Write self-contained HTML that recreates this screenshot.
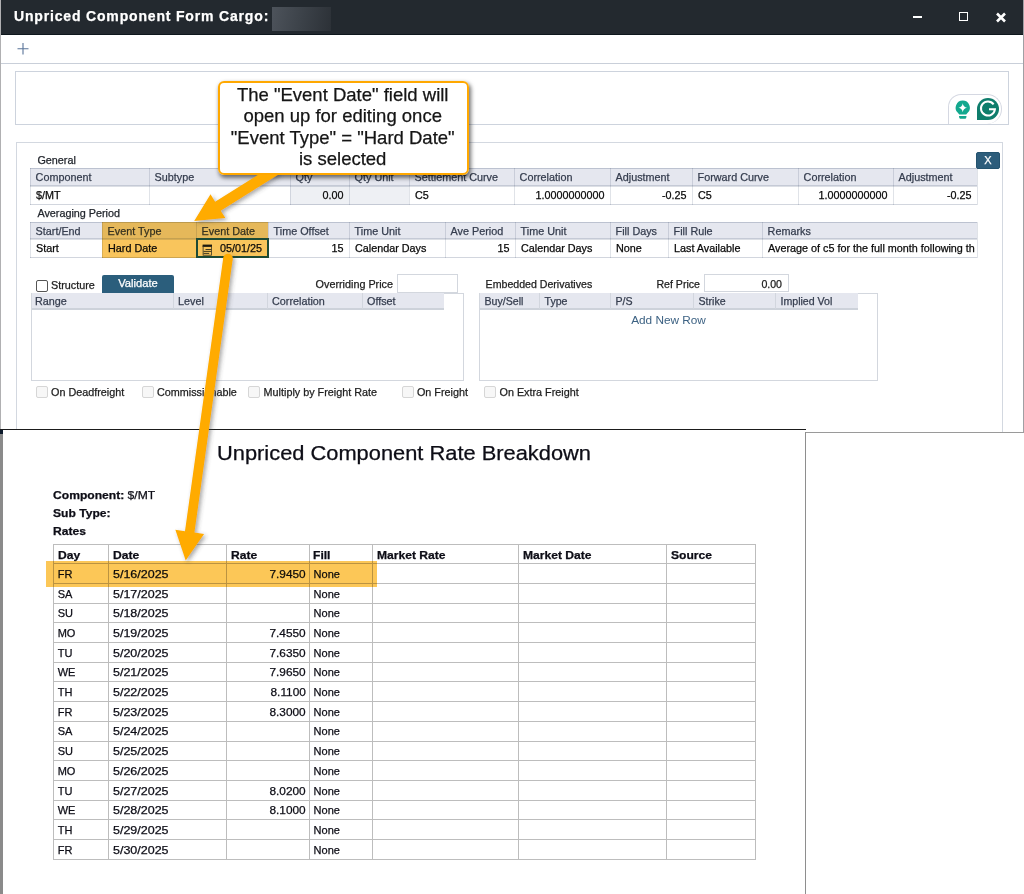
<!DOCTYPE html>
<html><head><meta charset="utf-8">
<style>
*{box-sizing:border-box;margin:0;padding:0}
html,body{width:1024px;height:894px;overflow:hidden;background:#fff;font-family:"Liberation Sans",sans-serif}
body{position:relative}
.a{position:absolute}
.t{white-space:nowrap;-webkit-text-stroke:0.25px currentColor}
</style></head>
<body>
<div class="a" style="left:0px;top:0px;width:1px;height:430px;background:#b0b0b2;"></div>
<div class="a" style="left:1023px;top:0px;width:1px;height:433px;background:#a0a0a4;"></div>
<div class="a" style="left:1px;top:0px;width:1022px;height:34px;background:#23292f;"></div>
<div class="a" style="left:1px;top:34px;width:1022px;height:1px;background:#0e171d;"></div>
<div class="a t" style="left:14px;top:8.10px;font-size:14px;line-height:16.1px;color:#fff;font-weight:bold;letter-spacing:0.83px;">Unpriced Component Form Cargo:</div>
<div class="a" style="left:272px;top:7px;width:59px;height:24px;background:linear-gradient(100deg,#4d535b 0%,#3c4249 50%,#2c3137 100%);"></div>
<div class="a" style="left:913px;top:16px;width:9px;height:2px;background:#fff;"></div>
<div class="a" style="left:959px;top:12px;width:9px;height:9px;border:1.5px solid #fff;"></div>
<svg class="a" style="left:995px;top:12px" width="12" height="11" viewBox="0 0 12 11"><path d="M2 1.5 L10 9.5 M10 1.5 L2 9.5" stroke="#fff" stroke-width="2.6"/></svg>
<svg class="a" style="left:16px;top:42px" width="14" height="14" viewBox="0 0 14 14"><path d="M7 1 V12.5 M1.5 6.7 H12.5" stroke="#5a7499" stroke-width="1.1"/></svg>
<div class="a" style="left:1px;top:63px;width:1022px;height:1px;background:#c9cfd9;"></div>
<div class="a" style="left:15px;top:71px;width:994px;height:54px;border:1px solid #cdd3dd;"></div>
<div class="a" style="left:948px;top:94px;width:54px;height:30px;background:#fff;border:1.5px solid #d5d8e2;border-bottom:none;border-radius:13px 15px 15px 0;"></div>
<svg class="a" style="left:954px;top:99px" width="18" height="21" viewBox="0 0 18 21"><path d="M8.75 1.6 A7.1 7.1 0 0 1 13.9 13.6 L12.2 15.6 H5.3 L3.6 13.6 A7.1 7.1 0 0 1 8.75 1.6Z" fill="#13a88e"/><path d="M5 16.9 H12.5 Q12.5 19.8 10.5 19.8 H7 Q5 19.8 5 16.9Z" fill="#13a88e"/><path d="M8.75 4.3 Q9.3 8.2 13 8.75 Q9.3 9.3 8.75 13.2 Q8.2 9.3 4.5 8.75 Q8.2 8.2 8.75 4.3Z" fill="#fff"/></svg>
<svg class="a" style="left:976px;top:97px" width="24" height="24" viewBox="0 0 24 24"><path d="M12 1 A11 11 0 1 1 12 23 H1 V12 A11 11 0 0 1 12 1Z" fill="#0e7d6c"/><path d="M17.6 7.4 A7 7 0 1 0 18.9 12.3 H13" fill="none" stroke="#fff" stroke-width="2"/></svg>
<div class="a" style="left:16px;top:142px;width:987px;height:300px;border:1px solid #d3d8e0;"></div>
<div class="a" style="left:976px;top:151.5px;width:24px;height:17.5px;background:#2d5d7b;border:1px solid #24536f;border-radius:2px;"></div>
<div class="a t" style="left:688px;width:600px;text-align:center;top:154.06px;font-size:11px;line-height:12.65px;color:#fff;font-weight:normal;">X</div>
<div class="a t" style="left:37.4px;top:153.95px;font-size:10.8px;line-height:12.42px;color:#22262d;font-weight:normal;">General</div>
<div class="a" style="left:30px;top:168px;width:947px;height:18px;background:#e5e7ef;"></div>
<div class="a" style="left:30px;top:186px;width:947px;height:18.5px;background:#fff;"></div>
<div class="a" style="left:290px;top:186px;width:59px;height:18.5px;background:#eef0f4;"></div>
<div class="a" style="left:349px;top:186px;width:60px;height:18.5px;background:#eef0f4;"></div>
<div class="a" style="left:30px;top:168px;width:947px;height:1px;background:#d2d6de;mix-blend-mode:multiply;"></div>
<div class="a" style="left:30px;top:185px;width:947px;height:2px;background:#dcdfe5;mix-blend-mode:multiply;"></div>
<div class="a" style="left:30px;top:203.5px;width:947px;height:1px;background:#d2d6de;mix-blend-mode:multiply;"></div>
<div class="a" style="left:30px;top:168px;width:1px;height:36.5px;background:#e0e3e8;mix-blend-mode:multiply;"></div>
<div class="a" style="left:149px;top:168px;width:1px;height:36.5px;background:#e0e3e8;mix-blend-mode:multiply;"></div>
<div class="a" style="left:290px;top:168px;width:1px;height:36.5px;background:#e0e3e8;mix-blend-mode:multiply;"></div>
<div class="a" style="left:349px;top:168px;width:1px;height:36.5px;background:#e0e3e8;mix-blend-mode:multiply;"></div>
<div class="a" style="left:409px;top:168px;width:1px;height:36.5px;background:#e0e3e8;mix-blend-mode:multiply;"></div>
<div class="a" style="left:514px;top:168px;width:1px;height:36.5px;background:#e0e3e8;mix-blend-mode:multiply;"></div>
<div class="a" style="left:610px;top:168px;width:1px;height:36.5px;background:#e0e3e8;mix-blend-mode:multiply;"></div>
<div class="a" style="left:692px;top:168px;width:1px;height:36.5px;background:#e0e3e8;mix-blend-mode:multiply;"></div>
<div class="a" style="left:798px;top:168px;width:1px;height:36.5px;background:#e0e3e8;mix-blend-mode:multiply;"></div>
<div class="a" style="left:893px;top:168px;width:1px;height:36.5px;background:#e0e3e8;mix-blend-mode:multiply;"></div>
<div class="a" style="left:977px;top:168px;width:1px;height:36.5px;background:#e0e3e8;mix-blend-mode:multiply;"></div>
<div class="a t" style="left:35.6px;top:171.05px;font-size:10.8px;line-height:12.42px;color:#353d4e;font-weight:normal;">Component</div>
<div class="a t" style="left:154.6px;top:171.05px;font-size:10.8px;line-height:12.42px;color:#353d4e;font-weight:normal;">Subtype</div>
<div class="a t" style="left:295.6px;top:171.05px;font-size:10.8px;line-height:12.42px;color:#353d4e;font-weight:normal;">Qty</div>
<div class="a t" style="left:354.6px;top:171.05px;font-size:10.8px;line-height:12.42px;color:#353d4e;font-weight:normal;">Qty Unit</div>
<div class="a t" style="left:414.6px;top:171.05px;font-size:10.8px;line-height:12.42px;color:#353d4e;font-weight:normal;">Settlement Curve</div>
<div class="a t" style="left:519.6px;top:171.05px;font-size:10.8px;line-height:12.42px;color:#353d4e;font-weight:normal;">Correlation</div>
<div class="a t" style="left:615.6px;top:171.05px;font-size:10.8px;line-height:12.42px;color:#353d4e;font-weight:normal;">Adjustment</div>
<div class="a t" style="left:697.6px;top:171.05px;font-size:10.8px;line-height:12.42px;color:#353d4e;font-weight:normal;">Forward Curve</div>
<div class="a t" style="left:803.6px;top:171.05px;font-size:10.8px;line-height:12.42px;color:#353d4e;font-weight:normal;">Correlation</div>
<div class="a t" style="left:898.6px;top:171.05px;font-size:10.8px;line-height:12.42px;color:#353d4e;font-weight:normal;">Adjustment</div>
<div class="a t" style="left:36px;top:189.25px;font-size:10.8px;line-height:12.42px;color:#0a0a0a;font-weight:normal;">$/MT</div>
<div class="a t" style="left:155px;top:189.25px;font-size:10.8px;line-height:12.42px;color:#0a0a0a;font-weight:normal;"></div>
<div class="a t" style="right:680.5px;top:189.25px;font-size:10.8px;line-height:12.42px;color:#0a0a0a;font-weight:normal;">0.00</div>
<div class="a t" style="left:355px;top:189.25px;font-size:10.8px;line-height:12.42px;color:#0a0a0a;font-weight:normal;"></div>
<div class="a t" style="left:415px;top:189.25px;font-size:10.8px;line-height:12.42px;color:#0a0a0a;font-weight:normal;">C5</div>
<div class="a t" style="right:419.5px;top:189.25px;font-size:10.8px;line-height:12.42px;color:#0a0a0a;font-weight:normal;">1.0000000000</div>
<div class="a t" style="right:337.5px;top:189.25px;font-size:10.8px;line-height:12.42px;color:#0a0a0a;font-weight:normal;">-0.25</div>
<div class="a t" style="left:698px;top:189.25px;font-size:10.8px;line-height:12.42px;color:#0a0a0a;font-weight:normal;">C5</div>
<div class="a t" style="right:136.5px;top:189.25px;font-size:10.8px;line-height:12.42px;color:#0a0a0a;font-weight:normal;">1.0000000000</div>
<div class="a t" style="right:52.5px;top:189.25px;font-size:10.8px;line-height:12.42px;color:#0a0a0a;font-weight:normal;">-0.25</div>
<div class="a t" style="left:37.4px;top:206.95px;font-size:10.8px;line-height:12.42px;color:#22262d;font-weight:normal;">Averaging Period</div>
<div class="a" style="left:30px;top:221.5px;width:947px;height:17.5px;background:#e5e7ef;"></div>
<div class="a" style="left:30px;top:239px;width:947px;height:18.5px;background:#fff;"></div>
<div class="a" style="left:30px;top:221.5px;width:947px;height:1px;background:#d2d6de;mix-blend-mode:multiply;"></div>
<div class="a" style="left:30px;top:238px;width:947px;height:2px;background:#dcdfe5;mix-blend-mode:multiply;"></div>
<div class="a" style="left:30px;top:256.5px;width:947px;height:1px;background:#d2d6de;mix-blend-mode:multiply;"></div>
<div class="a" style="left:30px;top:221.5px;width:1px;height:36.0px;background:#e0e3e8;mix-blend-mode:multiply;"></div>
<div class="a" style="left:102px;top:221.5px;width:1px;height:36.0px;background:#e0e3e8;mix-blend-mode:multiply;"></div>
<div class="a" style="left:196px;top:221.5px;width:1px;height:36.0px;background:#e0e3e8;mix-blend-mode:multiply;"></div>
<div class="a" style="left:268px;top:221.5px;width:1px;height:36.0px;background:#e0e3e8;mix-blend-mode:multiply;"></div>
<div class="a" style="left:349px;top:221.5px;width:1px;height:36.0px;background:#e0e3e8;mix-blend-mode:multiply;"></div>
<div class="a" style="left:445px;top:221.5px;width:1px;height:36.0px;background:#e0e3e8;mix-blend-mode:multiply;"></div>
<div class="a" style="left:515px;top:221.5px;width:1px;height:36.0px;background:#e0e3e8;mix-blend-mode:multiply;"></div>
<div class="a" style="left:610px;top:221.5px;width:1px;height:36.0px;background:#e0e3e8;mix-blend-mode:multiply;"></div>
<div class="a" style="left:668px;top:221.5px;width:1px;height:36.0px;background:#e0e3e8;mix-blend-mode:multiply;"></div>
<div class="a" style="left:762px;top:221.5px;width:1px;height:36.0px;background:#e0e3e8;mix-blend-mode:multiply;"></div>
<div class="a" style="left:977px;top:221.5px;width:1px;height:36.0px;background:#e0e3e8;mix-blend-mode:multiply;"></div>
<div class="a t" style="left:35.6px;top:224.55px;font-size:10.8px;line-height:12.42px;color:#353d4e;font-weight:normal;">Start/End</div>
<div class="a t" style="left:107.6px;top:224.55px;font-size:10.8px;line-height:12.42px;color:#353d4e;font-weight:normal;">Event Type</div>
<div class="a t" style="left:201.6px;top:224.55px;font-size:10.8px;line-height:12.42px;color:#353d4e;font-weight:normal;">Event Date</div>
<div class="a t" style="left:273.6px;top:224.55px;font-size:10.8px;line-height:12.42px;color:#353d4e;font-weight:normal;">Time Offset</div>
<div class="a t" style="left:354.6px;top:224.55px;font-size:10.8px;line-height:12.42px;color:#353d4e;font-weight:normal;">Time Unit</div>
<div class="a t" style="left:450.6px;top:224.55px;font-size:10.8px;line-height:12.42px;color:#353d4e;font-weight:normal;">Ave Period</div>
<div class="a t" style="left:520.6px;top:224.55px;font-size:10.8px;line-height:12.42px;color:#353d4e;font-weight:normal;">Time Unit</div>
<div class="a t" style="left:615.6px;top:224.55px;font-size:10.8px;line-height:12.42px;color:#353d4e;font-weight:normal;">Fill Days</div>
<div class="a t" style="left:673.6px;top:224.55px;font-size:10.8px;line-height:12.42px;color:#353d4e;font-weight:normal;">Fill Rule</div>
<div class="a t" style="left:767.6px;top:224.55px;font-size:10.8px;line-height:12.42px;color:#353d4e;font-weight:normal;">Remarks</div>
<div class="a t" style="left:36px;top:242.25px;font-size:10.8px;line-height:12.42px;color:#0a0a0a;font-weight:normal;">Start</div>
<div class="a t" style="left:108px;top:242.25px;font-size:10.8px;line-height:12.42px;color:#0a0a0a;font-weight:normal;">Hard Date</div>
<div class="a t" style="right:680.5px;top:242.25px;font-size:10.8px;line-height:12.42px;color:#0a0a0a;font-weight:normal;">15</div>
<div class="a t" style="left:355px;top:242.25px;font-size:10.8px;line-height:12.42px;color:#0a0a0a;font-weight:normal;">Calendar Days</div>
<div class="a t" style="right:514.5px;top:242.25px;font-size:10.8px;line-height:12.42px;color:#0a0a0a;font-weight:normal;">15</div>
<div class="a t" style="left:521px;top:242.25px;font-size:10.8px;line-height:12.42px;color:#0a0a0a;font-weight:normal;">Calendar Days</div>
<div class="a t" style="left:616px;top:242.25px;font-size:10.8px;line-height:12.42px;color:#0a0a0a;font-weight:normal;">None</div>
<div class="a t" style="left:674px;top:242.25px;font-size:10.8px;line-height:12.42px;color:#0a0a0a;font-weight:normal;">Last Available</div>
<div class="a t" style="left:768px;top:242.25px;font-size:10.8px;line-height:12.42px;color:#0a0a0a;font-weight:normal;">Average of c5 for the full month following th</div>
<div class="a" style="left:102px;top:221.5px;width:166px;height:17.5px;background:#ffcb60;mix-blend-mode:multiply;"></div>
<div class="a" style="left:102px;top:239px;width:166px;height:18.5px;background:#f9c55c;mix-blend-mode:multiply;"></div>
<div class="a" style="left:196px;top:238px;width:73px;height:19.5px;border:2px solid #1d4a35;"></div>
<svg class="a" style="left:201.5px;top:244px" width="11" height="12" viewBox="0 0 11 12"><rect x="0.6" y="0.6" width="9.4" height="2.3" fill="#16140c"/><rect x="1.1" y="2.2" width="8.4" height="9" fill="none" stroke="#3a3520" stroke-width="0.8"/><path d="M3.5 5.5 H9.3 M1.5 7.4 H9.3 M1.5 9.4 H7.2" stroke="#2b2a1a" stroke-width="0.9"/></svg>
<div class="a t" style="right:762px;top:242.25px;font-size:10.8px;line-height:12.42px;color:#0a0a0a;font-weight:normal;">05/01/25</div>
<div class="a" style="left:35.5px;top:279.5px;width:12px;height:12px;background:#fff;border:1px solid #555;border-radius:2px;"></div>
<div class="a t" style="left:51px;top:278.65px;font-size:10.8px;line-height:12.42px;color:#1d1d1d;font-weight:normal;">Structure</div>
<div class="a" style="left:102px;top:275px;width:72px;height:18px;background:#2b5e7c;border-radius:2px 2px 0 0;"></div>
<div class="a t" style="left:-162px;width:600px;text-align:center;top:276.98px;font-size:11.2px;line-height:12.88px;color:#fff;font-weight:normal;">Validate</div>
<div class="a t" style="right:631px;top:278.05px;font-size:10.8px;line-height:12.42px;color:#1d1d1d;font-weight:normal;">Overriding Price</div>
<div class="a" style="left:396.5px;top:274px;width:61px;height:19px;background:#fff;border:1px solid #d3d7de;"></div>
<div class="a" style="left:30.5px;top:292.5px;width:433px;height:88.5px;background:#fff;border:1px solid #d3d7de;"></div>
<div class="a" style="left:31.5px;top:293px;width:412.5px;height:16px;background:#e5e7ef;"></div>
<div class="a" style="left:31.5px;top:308px;width:412.5px;height:1.5px;background:#cdd2da;"></div>
<div class="a" style="left:173px;top:293px;width:1px;height:16px;background:#d2d6de;"></div>
<div class="a" style="left:267px;top:293px;width:1px;height:16px;background:#d2d6de;"></div>
<div class="a" style="left:362px;top:293px;width:1px;height:16px;background:#d2d6de;"></div>
<div class="a t" style="left:35px;top:295.05px;font-size:10.8px;line-height:12.42px;color:#353d4e;font-weight:normal;">Range</div>
<div class="a t" style="left:178px;top:295.05px;font-size:10.8px;line-height:12.42px;color:#353d4e;font-weight:normal;">Level</div>
<div class="a t" style="left:272px;top:295.05px;font-size:10.8px;line-height:12.42px;color:#353d4e;font-weight:normal;">Correlation</div>
<div class="a t" style="left:367px;top:295.05px;font-size:10.8px;line-height:12.42px;color:#353d4e;font-weight:normal;">Offset</div>
<div class="a t" style="left:485.6px;top:277.83px;font-size:10.6px;line-height:12.19px;color:#1d1d1d;font-weight:normal;">Embedded Derivatives</div>
<div class="a t" style="right:324px;top:277.83px;font-size:10.6px;line-height:12.19px;color:#1d1d1d;font-weight:normal;">Ref Price</div>
<div class="a" style="left:703.8px;top:274px;width:85px;height:18px;background:#fff;border:1px solid #d3d7de;"></div>
<div class="a t" style="right:242px;top:277.73px;font-size:10.6px;line-height:12.19px;color:#1d1d1d;font-weight:normal;">0.00</div>
<div class="a" style="left:479px;top:292.5px;width:398.5px;height:88.5px;background:#fff;border:1px solid #d3d7de;"></div>
<div class="a" style="left:480px;top:293px;width:377.8px;height:16px;background:#e5e7ef;"></div>
<div class="a" style="left:480px;top:308px;width:377.8px;height:1.5px;background:#cdd2da;"></div>
<div class="a" style="left:539px;top:293px;width:1px;height:16px;background:#d2d6de;"></div>
<div class="a" style="left:610px;top:293px;width:1px;height:16px;background:#d2d6de;"></div>
<div class="a" style="left:693px;top:293px;width:1px;height:16px;background:#d2d6de;"></div>
<div class="a" style="left:775px;top:293px;width:1px;height:16px;background:#d2d6de;"></div>
<div class="a t" style="left:484.5px;top:295.23px;font-size:10.6px;line-height:12.19px;color:#353d4e;font-weight:normal;">Buy/Sell</div>
<div class="a t" style="left:544.5px;top:295.23px;font-size:10.6px;line-height:12.19px;color:#353d4e;font-weight:normal;">Type</div>
<div class="a t" style="left:615.5px;top:295.23px;font-size:10.6px;line-height:12.19px;color:#353d4e;font-weight:normal;">P/S</div>
<div class="a t" style="left:698.5px;top:295.23px;font-size:10.6px;line-height:12.19px;color:#353d4e;font-weight:normal;">Strike</div>
<div class="a t" style="left:780.5px;top:295.23px;font-size:10.6px;line-height:12.19px;color:#353d4e;font-weight:normal;">Implied Vol</div>
<div class="a t" style="left:368.5px;width:600px;text-align:center;top:313.63px;font-size:11.8px;line-height:13.57px;color:#3d6283;font-weight:normal;-webkit-text-stroke:0;">Add New Row</div>
<div class="a" style="left:35.7px;top:385.7px;width:12px;height:12px;background:#f7f7f7;border:1px solid #d6d6d6;border-radius:2px;"></div>
<div class="a t" style="left:51px;top:385.55px;font-size:10.8px;line-height:12.42px;color:#1d1d1d;font-weight:normal;">On Deadfreight</div>
<div class="a" style="left:142.3px;top:385.7px;width:12px;height:12px;background:#f7f7f7;border:1px solid #d6d6d6;border-radius:2px;"></div>
<div class="a t" style="left:157px;top:385.55px;font-size:10.8px;line-height:12.42px;color:#1d1d1d;font-weight:normal;">Commissionable</div>
<div class="a" style="left:248.4px;top:385.7px;width:12px;height:12px;background:#f7f7f7;border:1px solid #d6d6d6;border-radius:2px;"></div>
<div class="a t" style="left:263.6px;top:385.55px;font-size:10.8px;line-height:12.42px;color:#1d1d1d;font-weight:normal;">Multiply by Freight Rate</div>
<div class="a" style="left:401.7px;top:385.7px;width:12px;height:12px;background:#f7f7f7;border:1px solid #d6d6d6;border-radius:2px;"></div>
<div class="a t" style="left:416.9px;top:385.55px;font-size:10.8px;line-height:12.42px;color:#1d1d1d;font-weight:normal;">On Freight</div>
<div class="a" style="left:484.4px;top:385.7px;width:12px;height:12px;background:#f7f7f7;border:1px solid #d6d6d6;border-radius:2px;"></div>
<div class="a t" style="left:499.5px;top:385.55px;font-size:10.8px;line-height:12.42px;color:#1d1d1d;font-weight:normal;">On Extra Freight</div>
<div class="a" style="left:0px;top:429px;width:805.5px;height:465px;background:#fff;"></div>
<div class="a" style="left:0px;top:429px;width:806px;height:1px;background:#1b1b1b;"></div>
<div class="a" style="left:805.5px;top:432px;width:218.5px;height:462px;background:#fff;"></div>
<div class="a" style="left:805px;top:432px;width:219px;height:1px;background:#9a9a9a;"></div>
<div class="a" style="left:805px;top:432px;width:1px;height:462px;background:#8e8e8e;"></div>
<div class="a" style="left:0px;top:430px;width:3px;height:464px;background:#8a8a8a;"></div>
<div class="a" style="left:0px;top:430px;width:3px;height:4px;background:#0c1a2a;"></div>
<div class="a t" style="left:217.4px;top:443.21px;font-size:19.3px;line-height:22.2px;font-weight:normal;color:#0d0d16;transform:scaleX(1.133);transform-origin:left">Unpriced Component Rate Breakdown</div>
<div class="a t" style="left:53.4px;top:488.61px;font-size:11px;line-height:12.65px;font-weight:normal;color:#0d0d16;transform:scaleX(1.1);transform-origin:left"><b>Component:</b> $/MT</div>
<div class="a t" style="left:53.4px;top:506.76px;font-size:11px;line-height:12.65px;font-weight:bold;color:#0d0d16;transform:scaleX(1.1);transform-origin:left">Sub Type:</div>
<div class="a t" style="left:53.4px;top:524.96px;font-size:11px;line-height:12.65px;font-weight:bold;color:#0d0d16;transform:scaleX(1.1);transform-origin:left">Rates</div>
<div class="a" style="left:53px;top:544px;width:1px;height:316px;background:#bdbdbd;"></div>
<div class="a" style="left:108px;top:544px;width:1px;height:316px;background:#bdbdbd;"></div>
<div class="a" style="left:226px;top:544px;width:1px;height:316px;background:#bdbdbd;"></div>
<div class="a" style="left:309px;top:544px;width:1px;height:316px;background:#bdbdbd;"></div>
<div class="a" style="left:372px;top:544px;width:1px;height:316px;background:#bdbdbd;"></div>
<div class="a" style="left:518px;top:544px;width:1px;height:316px;background:#bdbdbd;"></div>
<div class="a" style="left:666px;top:544px;width:1px;height:316px;background:#bdbdbd;"></div>
<div class="a" style="left:755px;top:544px;width:1px;height:316px;background:#bdbdbd;"></div>
<div class="a" style="left:53px;top:544px;width:703px;height:1px;background:#bdbdbd;"></div>
<div class="a" style="left:53px;top:563px;width:703px;height:1px;background:#bdbdbd;"></div>
<div class="a" style="left:53px;top:583px;width:703px;height:1px;background:#bdbdbd;"></div>
<div class="a" style="left:53px;top:603px;width:703px;height:1px;background:#bdbdbd;"></div>
<div class="a" style="left:53px;top:622px;width:703px;height:1px;background:#bdbdbd;"></div>
<div class="a" style="left:53px;top:642px;width:703px;height:1px;background:#bdbdbd;"></div>
<div class="a" style="left:53px;top:662px;width:703px;height:1px;background:#bdbdbd;"></div>
<div class="a" style="left:53px;top:681px;width:703px;height:1px;background:#bdbdbd;"></div>
<div class="a" style="left:53px;top:701px;width:703px;height:1px;background:#bdbdbd;"></div>
<div class="a" style="left:53px;top:721px;width:703px;height:1px;background:#bdbdbd;"></div>
<div class="a" style="left:53px;top:741px;width:703px;height:1px;background:#bdbdbd;"></div>
<div class="a" style="left:53px;top:760px;width:703px;height:1px;background:#bdbdbd;"></div>
<div class="a" style="left:53px;top:780px;width:703px;height:1px;background:#bdbdbd;"></div>
<div class="a" style="left:53px;top:800px;width:703px;height:1px;background:#bdbdbd;"></div>
<div class="a" style="left:53px;top:819px;width:703px;height:1px;background:#bdbdbd;"></div>
<div class="a" style="left:53px;top:839px;width:703px;height:1px;background:#bdbdbd;"></div>
<div class="a" style="left:53px;top:859px;width:703px;height:1px;background:#bdbdbd;"></div>
<div class="a t" style="left:57.7px;top:548.66px;font-size:11px;line-height:12.65px;font-weight:bold;color:#0d0d16;transform:scaleX(1.1);transform-origin:left">Day</div>
<div class="a t" style="left:112.7px;top:548.66px;font-size:11px;line-height:12.65px;font-weight:bold;color:#0d0d16;transform:scaleX(1.1);transform-origin:left">Date</div>
<div class="a t" style="left:230.7px;top:548.66px;font-size:11px;line-height:12.65px;font-weight:bold;color:#0d0d16;transform:scaleX(1.1);transform-origin:left">Rate</div>
<div class="a t" style="left:313.4px;top:548.66px;font-size:11px;line-height:12.65px;font-weight:bold;color:#0d0d16;transform:scaleX(1.1);transform-origin:left">Fill</div>
<div class="a t" style="left:376.5px;top:548.66px;font-size:11px;line-height:12.65px;font-weight:bold;color:#0d0d16;transform:scaleX(1.1);transform-origin:left">Market Rate</div>
<div class="a t" style="left:522.9000000000001px;top:548.66px;font-size:11px;line-height:12.65px;font-weight:bold;color:#0d0d16;transform:scaleX(1.1);transform-origin:left">Market Date</div>
<div class="a t" style="left:670.6px;top:548.66px;font-size:11px;line-height:12.65px;font-weight:bold;color:#0d0d16;transform:scaleX(1.1);transform-origin:left">Source</div>
<div class="a t" style="left:57.7px;top:567.86px;font-size:11px;line-height:12.65px;font-weight:normal;color:#0d0d16;transform:scaleX(1.0);transform-origin:left">FR</div>
<div class="a t" style="left:112.8px;top:567.86px;font-size:11px;line-height:12.65px;font-weight:normal;color:#0d0d16;transform:scaleX(1.135);transform-origin:left">5/16/2025</div>
<div class="a t" style="right:718.5px;top:567.86px;font-size:11px;line-height:12.65px;font-weight:normal;color:#0d0d16;transform:scaleX(1.075);transform-origin:right">7.9450</div>
<div class="a t" style="left:313.59999999999997px;top:567.86px;font-size:11px;line-height:12.65px;font-weight:normal;color:#0d0d16;transform:scaleX(1.0);transform-origin:left">None</div>
<div class="a t" style="left:57.7px;top:587.56px;font-size:11px;line-height:12.65px;font-weight:normal;color:#0d0d16;transform:scaleX(1.0);transform-origin:left">SA</div>
<div class="a t" style="left:112.8px;top:587.56px;font-size:11px;line-height:12.65px;font-weight:normal;color:#0d0d16;transform:scaleX(1.135);transform-origin:left">5/17/2025</div>
<div class="a t" style="left:313.59999999999997px;top:587.56px;font-size:11px;line-height:12.65px;font-weight:normal;color:#0d0d16;transform:scaleX(1.0);transform-origin:left">None</div>
<div class="a t" style="left:57.7px;top:607.26px;font-size:11px;line-height:12.65px;font-weight:normal;color:#0d0d16;transform:scaleX(1.0);transform-origin:left">SU</div>
<div class="a t" style="left:112.8px;top:607.26px;font-size:11px;line-height:12.65px;font-weight:normal;color:#0d0d16;transform:scaleX(1.135);transform-origin:left">5/18/2025</div>
<div class="a t" style="left:313.59999999999997px;top:607.26px;font-size:11px;line-height:12.65px;font-weight:normal;color:#0d0d16;transform:scaleX(1.0);transform-origin:left">None</div>
<div class="a t" style="left:57.7px;top:626.96px;font-size:11px;line-height:12.65px;font-weight:normal;color:#0d0d16;transform:scaleX(1.0);transform-origin:left">MO</div>
<div class="a t" style="left:112.8px;top:626.96px;font-size:11px;line-height:12.65px;font-weight:normal;color:#0d0d16;transform:scaleX(1.135);transform-origin:left">5/19/2025</div>
<div class="a t" style="right:718.5px;top:626.96px;font-size:11px;line-height:12.65px;font-weight:normal;color:#0d0d16;transform:scaleX(1.075);transform-origin:right">7.4550</div>
<div class="a t" style="left:313.59999999999997px;top:626.96px;font-size:11px;line-height:12.65px;font-weight:normal;color:#0d0d16;transform:scaleX(1.0);transform-origin:left">None</div>
<div class="a t" style="left:57.7px;top:646.66px;font-size:11px;line-height:12.65px;font-weight:normal;color:#0d0d16;transform:scaleX(1.0);transform-origin:left">TU</div>
<div class="a t" style="left:112.8px;top:646.66px;font-size:11px;line-height:12.65px;font-weight:normal;color:#0d0d16;transform:scaleX(1.135);transform-origin:left">5/20/2025</div>
<div class="a t" style="right:718.5px;top:646.66px;font-size:11px;line-height:12.65px;font-weight:normal;color:#0d0d16;transform:scaleX(1.075);transform-origin:right">7.6350</div>
<div class="a t" style="left:313.59999999999997px;top:646.66px;font-size:11px;line-height:12.65px;font-weight:normal;color:#0d0d16;transform:scaleX(1.0);transform-origin:left">None</div>
<div class="a t" style="left:57.7px;top:666.36px;font-size:11px;line-height:12.65px;font-weight:normal;color:#0d0d16;transform:scaleX(1.0);transform-origin:left">WE</div>
<div class="a t" style="left:112.8px;top:666.36px;font-size:11px;line-height:12.65px;font-weight:normal;color:#0d0d16;transform:scaleX(1.135);transform-origin:left">5/21/2025</div>
<div class="a t" style="right:718.5px;top:666.36px;font-size:11px;line-height:12.65px;font-weight:normal;color:#0d0d16;transform:scaleX(1.075);transform-origin:right">7.9650</div>
<div class="a t" style="left:313.59999999999997px;top:666.36px;font-size:11px;line-height:12.65px;font-weight:normal;color:#0d0d16;transform:scaleX(1.0);transform-origin:left">None</div>
<div class="a t" style="left:57.7px;top:686.06px;font-size:11px;line-height:12.65px;font-weight:normal;color:#0d0d16;transform:scaleX(1.0);transform-origin:left">TH</div>
<div class="a t" style="left:112.8px;top:686.06px;font-size:11px;line-height:12.65px;font-weight:normal;color:#0d0d16;transform:scaleX(1.135);transform-origin:left">5/22/2025</div>
<div class="a t" style="right:718.5px;top:686.06px;font-size:11px;line-height:12.65px;font-weight:normal;color:#0d0d16;transform:scaleX(1.075);transform-origin:right">8.1100</div>
<div class="a t" style="left:313.59999999999997px;top:686.06px;font-size:11px;line-height:12.65px;font-weight:normal;color:#0d0d16;transform:scaleX(1.0);transform-origin:left">None</div>
<div class="a t" style="left:57.7px;top:705.76px;font-size:11px;line-height:12.65px;font-weight:normal;color:#0d0d16;transform:scaleX(1.0);transform-origin:left">FR</div>
<div class="a t" style="left:112.8px;top:705.76px;font-size:11px;line-height:12.65px;font-weight:normal;color:#0d0d16;transform:scaleX(1.135);transform-origin:left">5/23/2025</div>
<div class="a t" style="right:718.5px;top:705.76px;font-size:11px;line-height:12.65px;font-weight:normal;color:#0d0d16;transform:scaleX(1.075);transform-origin:right">8.3000</div>
<div class="a t" style="left:313.59999999999997px;top:705.76px;font-size:11px;line-height:12.65px;font-weight:normal;color:#0d0d16;transform:scaleX(1.0);transform-origin:left">None</div>
<div class="a t" style="left:57.7px;top:725.46px;font-size:11px;line-height:12.65px;font-weight:normal;color:#0d0d16;transform:scaleX(1.0);transform-origin:left">SA</div>
<div class="a t" style="left:112.8px;top:725.46px;font-size:11px;line-height:12.65px;font-weight:normal;color:#0d0d16;transform:scaleX(1.135);transform-origin:left">5/24/2025</div>
<div class="a t" style="left:313.59999999999997px;top:725.46px;font-size:11px;line-height:12.65px;font-weight:normal;color:#0d0d16;transform:scaleX(1.0);transform-origin:left">None</div>
<div class="a t" style="left:57.7px;top:745.16px;font-size:11px;line-height:12.65px;font-weight:normal;color:#0d0d16;transform:scaleX(1.0);transform-origin:left">SU</div>
<div class="a t" style="left:112.8px;top:745.16px;font-size:11px;line-height:12.65px;font-weight:normal;color:#0d0d16;transform:scaleX(1.135);transform-origin:left">5/25/2025</div>
<div class="a t" style="left:313.59999999999997px;top:745.16px;font-size:11px;line-height:12.65px;font-weight:normal;color:#0d0d16;transform:scaleX(1.0);transform-origin:left">None</div>
<div class="a t" style="left:57.7px;top:764.86px;font-size:11px;line-height:12.65px;font-weight:normal;color:#0d0d16;transform:scaleX(1.0);transform-origin:left">MO</div>
<div class="a t" style="left:112.8px;top:764.86px;font-size:11px;line-height:12.65px;font-weight:normal;color:#0d0d16;transform:scaleX(1.135);transform-origin:left">5/26/2025</div>
<div class="a t" style="left:313.59999999999997px;top:764.86px;font-size:11px;line-height:12.65px;font-weight:normal;color:#0d0d16;transform:scaleX(1.0);transform-origin:left">None</div>
<div class="a t" style="left:57.7px;top:784.56px;font-size:11px;line-height:12.65px;font-weight:normal;color:#0d0d16;transform:scaleX(1.0);transform-origin:left">TU</div>
<div class="a t" style="left:112.8px;top:784.56px;font-size:11px;line-height:12.65px;font-weight:normal;color:#0d0d16;transform:scaleX(1.135);transform-origin:left">5/27/2025</div>
<div class="a t" style="right:718.5px;top:784.56px;font-size:11px;line-height:12.65px;font-weight:normal;color:#0d0d16;transform:scaleX(1.075);transform-origin:right">8.0200</div>
<div class="a t" style="left:313.59999999999997px;top:784.56px;font-size:11px;line-height:12.65px;font-weight:normal;color:#0d0d16;transform:scaleX(1.0);transform-origin:left">None</div>
<div class="a t" style="left:57.7px;top:804.26px;font-size:11px;line-height:12.65px;font-weight:normal;color:#0d0d16;transform:scaleX(1.0);transform-origin:left">WE</div>
<div class="a t" style="left:112.8px;top:804.26px;font-size:11px;line-height:12.65px;font-weight:normal;color:#0d0d16;transform:scaleX(1.135);transform-origin:left">5/28/2025</div>
<div class="a t" style="right:718.5px;top:804.26px;font-size:11px;line-height:12.65px;font-weight:normal;color:#0d0d16;transform:scaleX(1.075);transform-origin:right">8.1000</div>
<div class="a t" style="left:313.59999999999997px;top:804.26px;font-size:11px;line-height:12.65px;font-weight:normal;color:#0d0d16;transform:scaleX(1.0);transform-origin:left">None</div>
<div class="a t" style="left:57.7px;top:823.96px;font-size:11px;line-height:12.65px;font-weight:normal;color:#0d0d16;transform:scaleX(1.0);transform-origin:left">TH</div>
<div class="a t" style="left:112.8px;top:823.96px;font-size:11px;line-height:12.65px;font-weight:normal;color:#0d0d16;transform:scaleX(1.135);transform-origin:left">5/29/2025</div>
<div class="a t" style="left:313.59999999999997px;top:823.96px;font-size:11px;line-height:12.65px;font-weight:normal;color:#0d0d16;transform:scaleX(1.0);transform-origin:left">None</div>
<div class="a t" style="left:57.7px;top:843.66px;font-size:11px;line-height:12.65px;font-weight:normal;color:#0d0d16;transform:scaleX(1.0);transform-origin:left">FR</div>
<div class="a t" style="left:112.8px;top:843.66px;font-size:11px;line-height:12.65px;font-weight:normal;color:#0d0d16;transform:scaleX(1.135);transform-origin:left">5/30/2025</div>
<div class="a t" style="left:313.59999999999997px;top:843.66px;font-size:11px;line-height:12.65px;font-weight:normal;color:#0d0d16;transform:scaleX(1.0);transform-origin:left">None</div>
<div class="a" style="left:46px;top:560.9px;width:331px;height:26px;background:#fcc757;mix-blend-mode:multiply;"></div>
<svg class="a" style="left:0;top:0" width="1024" height="894"><defs><filter id="sh" x="-20%" y="-20%" width="140%" height="140%"><feDropShadow dx="2" dy="2" stdDeviation="2" flood-color="#404040" flood-opacity="0.45"/></filter></defs><g filter="url(#sh)"><polygon points="223.25,257.83 184.97,531.21 175.36,529.87 185.70,560.60 204.08,533.89 194.47,532.55 232.75,259.17" fill="#ffab00"/><circle cx="228.00" cy="258.50" r="4.80" fill="#ffab00"/></g></svg>
<div class="a" style="left:218px;top:81px;width:251px;height:93.7px;background:#fff;border-radius:6px;box-shadow:1.5px 2.5px 4px rgba(0,0,0,0.55);"></div>
<svg class="a" style="left:0;top:0" width="1024" height="894"><g filter="url(#sh)"><polygon points="273.69,165.01 215.12,201.65 210.51,194.28 194.20,221.00 225.36,218.01 220.75,210.64 279.31,173.99" fill="#ffab00"/></g></svg>
<div class="a" style="left:218px;top:81px;width:251px;height:93.7px;background:#fff;border:2.6px solid #ffa800;border-radius:6px;"></div>
<div class="a t" style="left:42.69999999999999px;width:600px;text-align:center;top:83.95px;font-size:18.5px;line-height:21.27px;color:#151515;font-weight:normal;">The &quot;Event Date&quot; field will</div>
<div class="a t" style="left:42.69999999999999px;width:600px;text-align:center;top:105.40px;font-size:18.5px;line-height:21.27px;color:#151515;font-weight:normal;">open up for editing once</div>
<div class="a t" style="left:42.69999999999999px;width:600px;text-align:center;top:126.85px;font-size:18.5px;line-height:21.27px;color:#151515;font-weight:normal;">&quot;Event Type&quot; = &quot;Hard Date&quot;</div>
<div class="a t" style="left:42.69999999999999px;width:600px;text-align:center;top:148.30px;font-size:18.5px;line-height:21.27px;color:#151515;font-weight:normal;">is selected</div>
</body></html>
